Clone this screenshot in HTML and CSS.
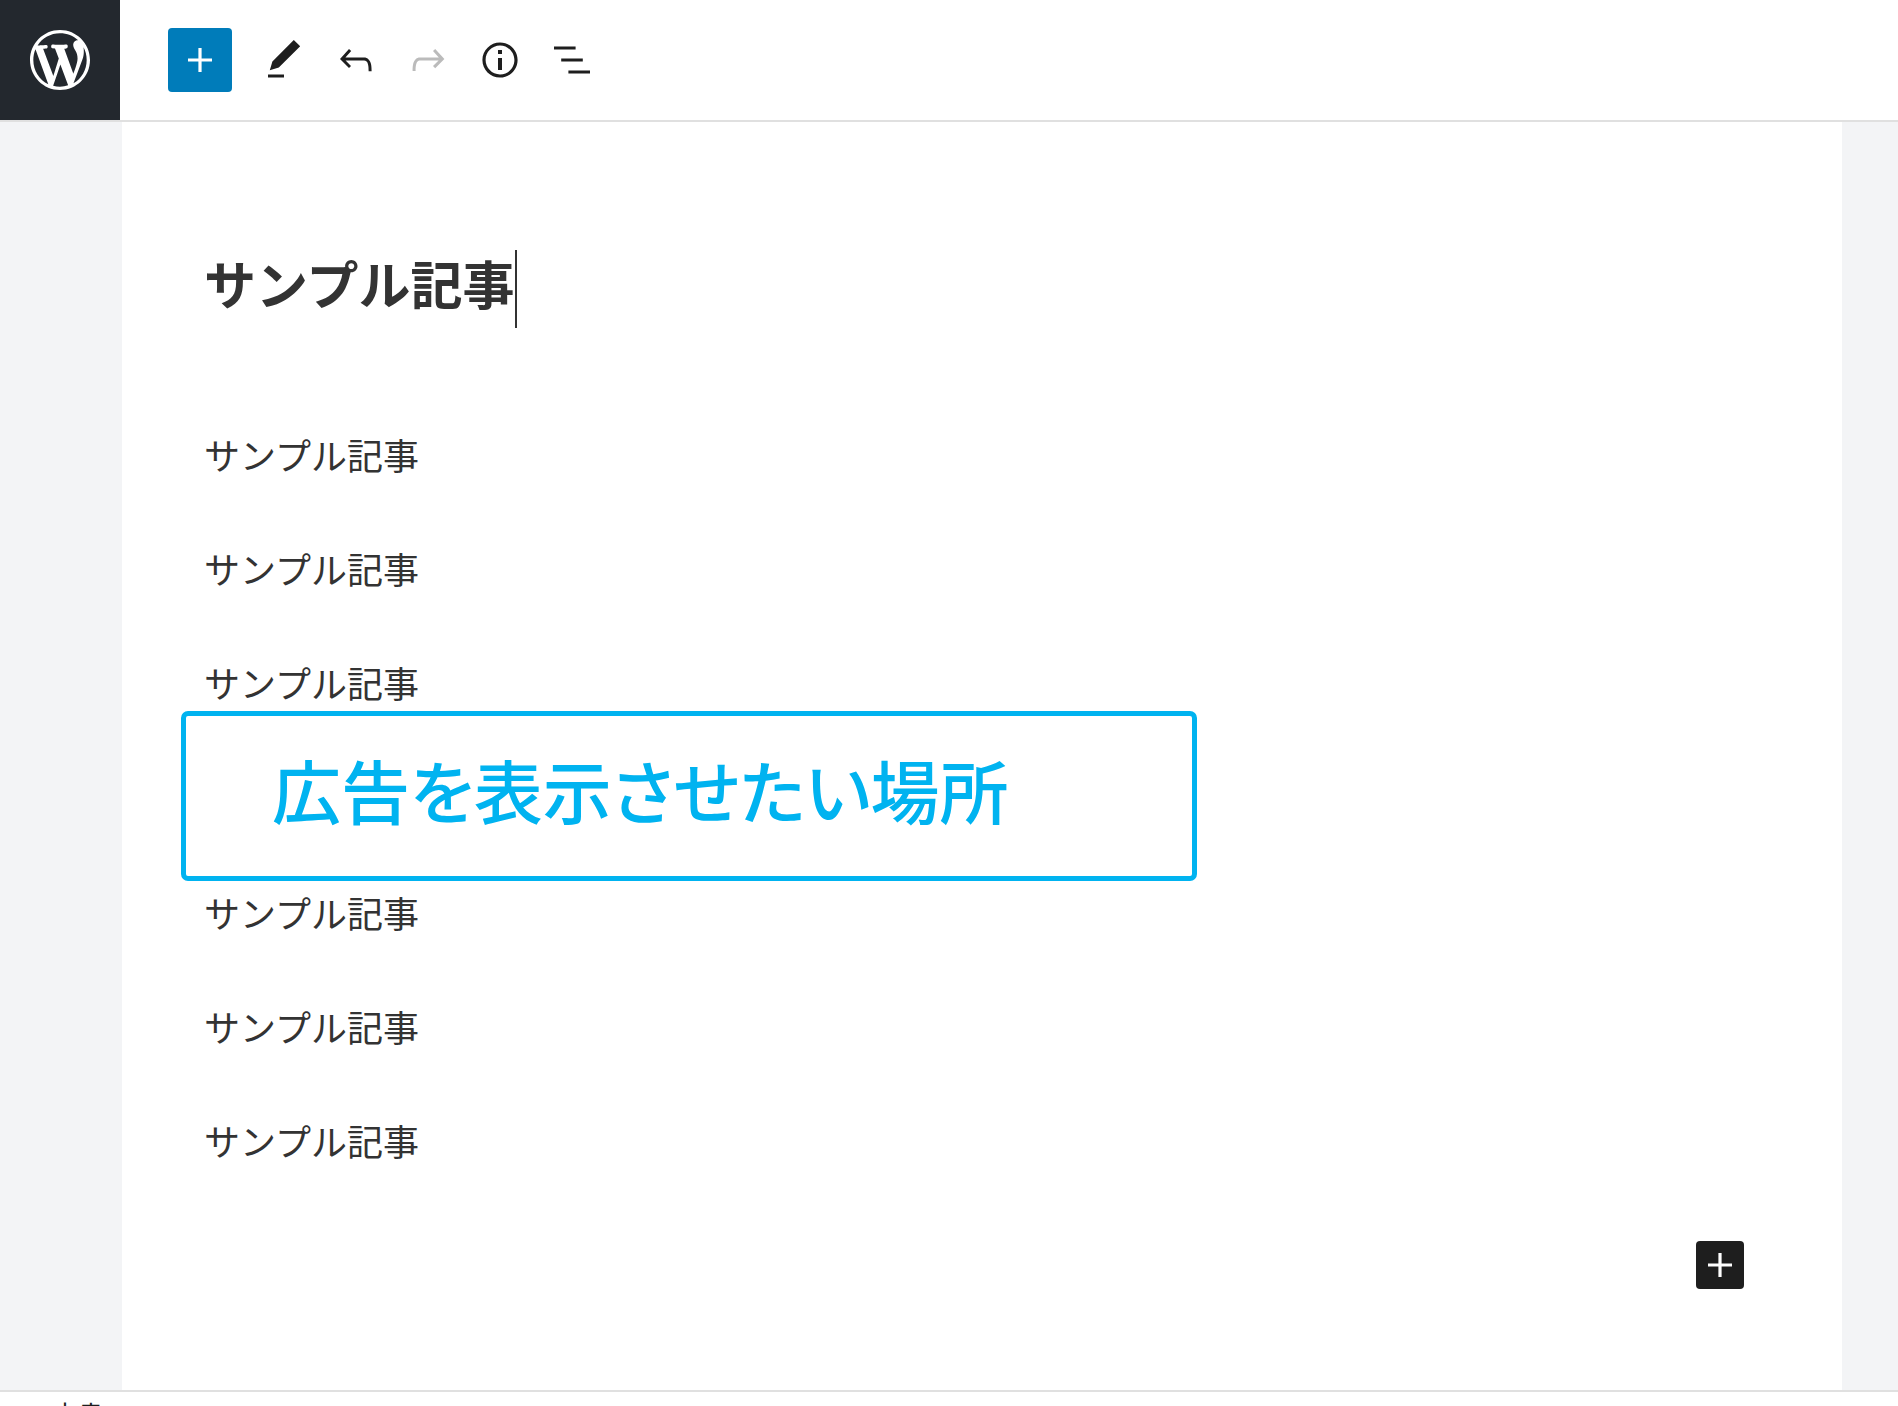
FILE: index.html
```html
<!DOCTYPE html>
<html lang="ja">
<head>
<meta charset="utf-8">
<title>サンプル記事</title>
<link rel="stylesheet" href="styles.css">
</head>
<body>
<div class="app">
  <header class="header">
    <a class="logo" href="#" aria-label="投稿一覧">
      <svg class="logo-icon" viewBox="-2 -2 24 24" aria-hidden="true"><path d="M20 10c0-5.51-4.49-10-10-10C4.48 0 0 4.49 0 10c0 5.52 4.48 10 10 10 5.51 0 10-4.48 10-10zM7.78 15.37L4.37 6.22c.55-.02 1.17-.08 1.17-.08.5-.06.44-1.13-.06-1.11 0 0-1.45.11-2.37.11-.18 0-.37 0-.58-.01C4.12 2.69 6.87 1.11 10 1.11c2.33 0 4.45.87 6.05 2.34-.68-.11-1.65.39-1.65 1.58 0 .74.45 1.36.9 2.1.35.61.55 1.36.55 2.46 0 1.49-1.4 5-1.4 5l-3.03-8.37c.54-.02.82-.17.82-.17.5-.05.44-1.25-.06-1.22 0 0-1.44.12-2.38.12-.87 0-2.33-.12-2.33-.12-.5-.03-.56 1.2-.06 1.22l.92.08 1.26 3.41zM17.41 10c.24-.64.74-1.87.43-4.25.7 1.29 1.05 2.71 1.05 4.25 0 3.29-1.73 6.24-4.4 7.78.97-2.59 1.94-5.2 2.92-7.78zM6.1 18.09C3.12 16.65 1.11 13.53 1.11 10c0-1.3.23-2.48.72-3.59C3.25 10.3 4.67 14.2 6.1 18.09zm4.03-6.63l2.58 6.98c-.86.29-1.76.45-2.71.45-.79 0-1.57-.11-2.29-.33.81-2.38 1.62-4.74 2.42-7.1z"/></svg>
    </a>
    <div class="toolbar" role="toolbar" aria-label="ドキュメントツール">
      <button class="tool tool-primary" type="button" aria-label="ブロックを追加">
        <svg class="icon" viewBox="0 0 24 24" aria-hidden="true"><path d="M18 11.2h-5.2V6h-1.6v5.2H6v1.6h5.2V18h1.6v-5.2H18z"/></svg>
      </button>
      <button class="tool" type="button" aria-label="ツール">
        <svg class="icon" viewBox="0 0 24 24" aria-hidden="true"><path d="M20.1 5.1L16.9 2 6.2 12.7l-1.3 4.4 4.5-1.3L20.1 5.1zM4 20.8h8v-1.5H4v1.5z"/></svg>
      </button>
      <button class="tool" type="button" aria-label="元に戻す">
        <svg class="icon" viewBox="0 0 24 24" aria-hidden="true"><path d="M18.3 11.7c-.6-.6-1.4-.9-2.3-.9H6.7l2.9-3.3-1.1-1-4.5 5L8.5 16l1-1-2.7-2.7H16c.5 0 .9.2 1.3.5 1 1 1 3.4 1 4.5v.3h1.5v-.2c0-1.5 0-4.3-1.5-5.7z"/></svg>
      </button>
      <button class="tool" type="button" aria-label="やり直す" disabled>
        <svg class="icon" viewBox="0 0 24 24" aria-hidden="true"><path d="M15.6 6.5l-1.1 1 2.9 3.3H8c-.9 0-1.7.3-2.3.9-1.4 1.5-1.4 4.2-1.4 5.6v.2h1.5v-.3c0-1.1 0-3.5 1-4.5.3-.3.7-.5 1.3-.5h9.2L14.5 15l1.1 1.1 4.6-4.6-4.6-5z"/></svg>
      </button>
      <button class="tool" type="button" aria-label="詳細">
        <svg class="icon" viewBox="0 0 24 24" aria-hidden="true"><path d="M12 3.2c-4.8 0-8.8 3.9-8.8 8.8 0 4.8 3.9 8.8 8.8 8.8 4.8 0 8.8-3.9 8.8-8.8 0-4.8-4-8.8-8.8-8.8zm0 16c-4 0-7.2-3.3-7.2-7.2C4.8 8 8 4.8 12 4.8s7.2 3.3 7.2 7.2c0 4-3.2 7.2-7.2 7.2zM11 17h2v-6h-2v6zm0-8h2V7h-2v2z"/></svg>
      </button>
      <button class="tool" type="button" aria-label="リスト表示">
        <svg class="icon" viewBox="0 0 24 24" aria-hidden="true"><path d="M13.8 5.2H3v1.5h10.8V5.2zm-3.6 12v1.5H21v-1.5H10.2zm7.2-6H6.6v1.5h10.8v-1.5z"/></svg>
      </button>
    </div>
  </header>

  <main class="workspace">
    <article class="canvas">
      <h1 class="title"><span>サンプル記事</span><span class="caret"></span></h1>
      <div class="blocks">
        <p class="block">サンプル記事</p>
        <p class="block">サンプル記事</p>
        <p class="block">サンプル記事</p>
      </div>
      <div class="ad-slot">広告を表示させたい場所</div>
      <div class="blocks">
        <p class="block">サンプル記事</p>
        <p class="block">サンプル記事</p>
        <p class="block">サンプル記事</p>
      </div>
      <div class="appender">
        <button class="append" type="button" aria-label="ブロックを追加">
          <svg class="icon" viewBox="0 0 24 24" aria-hidden="true"><path d="M18 11.2h-5.2V6h-1.6v5.2H6v1.6h5.2V18h1.6v-5.2H18z"/></svg>
        </button>
      </div>
    </article>
  </main>

  <footer class="footer">文書</footer>
</div>
</body>
</html>
```
FILE: styles.css
```css
* {
  box-sizing: border-box;
}

body {
  margin: 0;
  background: #fff;
  color: #333;
  font-family: "Noto Sans CJK JP", sans-serif;
}

.app {
  display: flex;
  flex-direction: column;
  height: 100vh;
  overflow: hidden;
}

.header {
  display: flex;
  flex: none;
  border-bottom: 2px solid #e0e0e0;
}

.logo {
  display: flex;
  align-items: center;
  justify-content: center;
  width: 120px;
  height: 120px;
  background: #23282e;
}

.logo-icon {
  width: 72px;
  height: 72px;
  fill: #fff;
}

.toolbar {
  display: flex;
  align-items: center;
  gap: 8px;
  padding-left: 48px;
}

.tool,
.append {
  display: flex;
  align-items: center;
  justify-content: center;
  width: 64px;
  height: 64px;
  padding: 0;
  border: 0;
  border-radius: 4px;
  background: none;
  color: #1e1e1e;
}

.tool:disabled {
  color: #bbb;
}

.tool-primary {
  margin-right: 12px;
  background: #007cba;
  color: #fff;
}

.icon {
  width: 48px;
  height: 48px;
  fill: currentColor;
}

.workspace {
  flex: 1;
  min-height: 0;
  padding: 0 56px 0 122px;
  background: #f3f4f6;
}

.canvas {
  height: 100%;
  padding: 128px 98px 0 82px;
  background: #fff;
}

.title {
  display: flex;
  gap: 1px;
  margin: 0 0 100px;
  font-size: 52px;
  line-height: 66px;
}

.caret {
  width: 2px;
  height: 78px;
  background: #333;
}

.blocks {
  display: flex;
  flex-direction: column;
  gap: 62px;
}

.block {
  margin: 0;
  font-size: 36px;
  line-height: 52px;
}

.ad-slot {
  max-width: 1016px;
  margin: 3px 0 5px -23px;
  padding: 28px 86px 42px;
  border: 5px solid #00b3f0;
  border-radius: 7px;
  color: #00b3f0;
  font-size: 69px;
  font-weight: 500;
  font-feature-settings: "palt";
  line-height: 90px;
}

.appender {
  display: flex;
  justify-content: flex-end;
  padding-top: 75px;
}

.append {
  width: 48px;
  height: 48px;
  background: #1e1e1e;
  color: #fff;
}

.footer {
  flex: none;
  height: 16px;
  padding: 7px 52px 0;
  border-top: 2px solid #e0e0e0;
  color: #1e1e1e;
  font-size: 26px;
  line-height: 30px;
}
```
